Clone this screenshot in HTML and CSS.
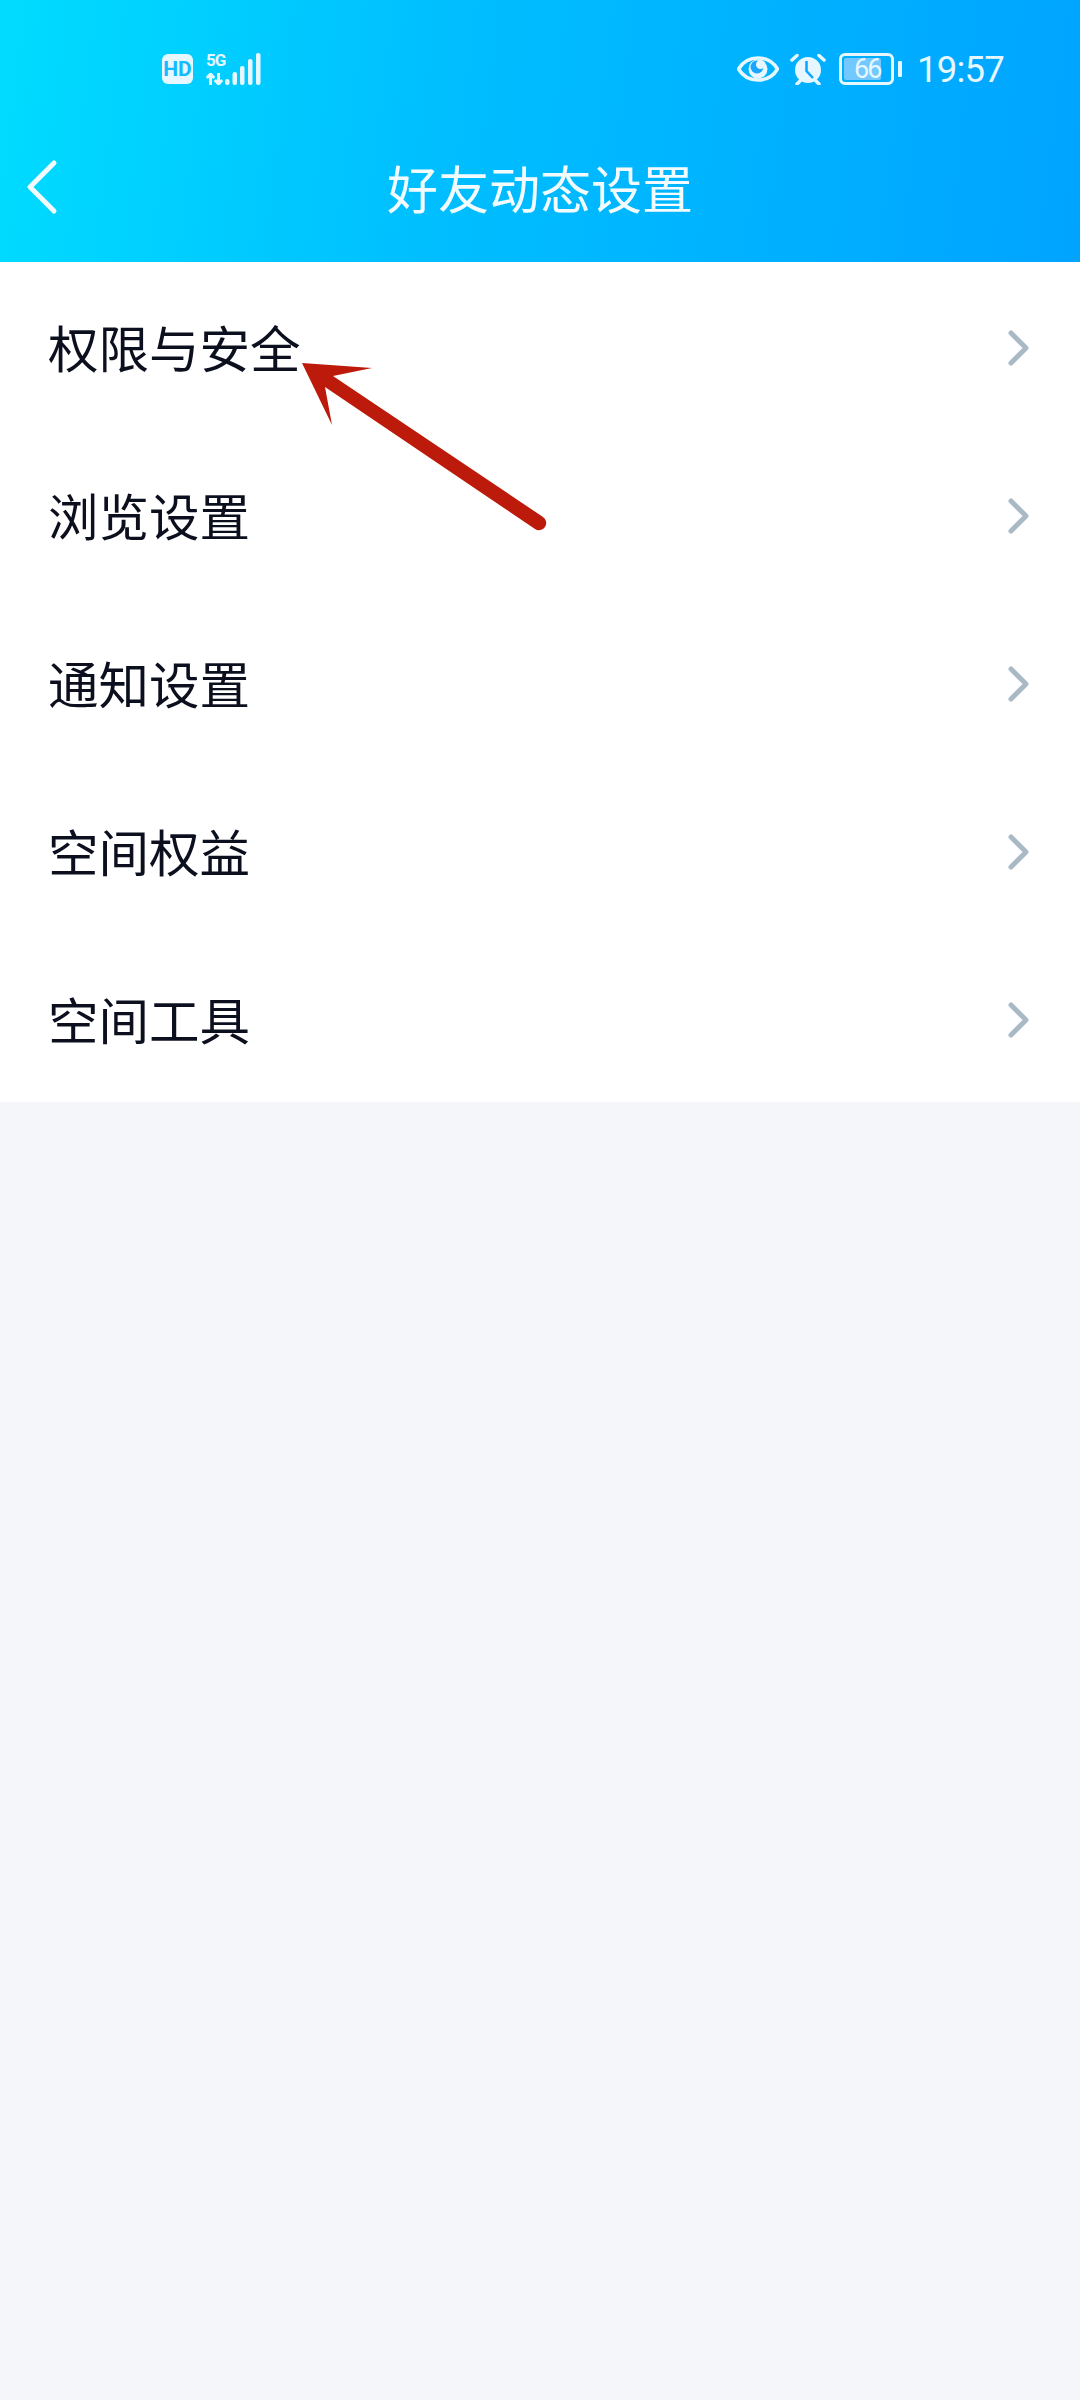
FILE: index.html
```html
<!DOCTYPE html>
<html lang="zh-CN">
<head>
<meta charset="UTF-8" />
<meta name="viewport" content="width=1080, initial-scale=1.0" />
<title>好友动态设置</title>
<link rel="stylesheet" href="styles.css">
</head>
<body>
  <div class="page">
    <header class="top">
      <div class="status-bar">
        <div class="status-left">
          <span class="hd">HD</span>
          <div class="net">
            <span class="fiveg">5G</span>
            <svg class="updown" width="17" height="12" viewBox="0 0 17 12">
              <path d="M4.500 12V1M.8 5l3.700-4L8.200 5" fill="none" stroke="#e6f7ff" stroke-width="3"/>
              <path d="M12.500 0V11M8.800 7l3.700 4L16.200 7" fill="none" stroke="#e6f7ff" stroke-width="3"/>
            </svg>
          </div>
          <svg class="signal" width="36" height="32" viewBox="0 0 36 32">
            <rect x="0" y="26" width="4.500" height="6" rx="2.200" fill="#e6f7ff"/>
            <rect x="7.500" y="19" width="4.500" height="13" rx="2" fill="#e6f7ff"/>
            <rect x="15" y="13" width="4.500" height="19" rx="2" fill="#e6f7ff"/>
            <rect x="23" y="6" width="4.500" height="26" rx="2" fill="#e6f7ff"/>
            <rect x="31" y="0" width="4.500" height="32" rx="2" fill="#e6f7ff"/>
          </svg>
        </div>
        <div class="status-right">
          <svg class="eye" width="42" height="26" viewBox="0 0 42 26">
            <path d="M1.500 13C6 5.500 13 2 21 2s15 3.500 19.500 11C36 20.500 29 24 21 24S6 20.500 1.500 13z" fill="none" stroke="#e6f7ff" stroke-width="3.500"/>
            <circle cx="21" cy="13" r="9.500" fill="#e6f7ff"/>
            <circle cx="20" cy="11" r="6.500" fill="#1aa6ff"/>
            <circle cx="23.500" cy="8.500" r="4.500" fill="#e6f7ff"/>
          </svg>
          <svg class="alarm" width="36" height="32" viewBox="0 0 36 32">
            <circle cx="18" cy="17" r="13" fill="#e6f7ff"/>
            <path d="M16.500 8v10l6.500 7" fill="none" stroke="#0aa6ff" stroke-width="2.500"/>
            <path d="M2 7l5-4.500M34 7l-5-4.500" fill="none" stroke="#e6f7ff" stroke-width="3.500" stroke-linecap="round"/>
            <path d="M7 31l3-3M29 31l-3-3" fill="none" stroke="#e6f7ff" stroke-width="3.500" stroke-linecap="round"/>
          </svg>
          <div class="battery">
            <div class="battery-box">
              <div class="battery-fill" style="width: 82%"></div>
              <span class="battery-num">66</span>
            </div>
            <div class="battery-nub"></div>
          </div>
          <span class="time">19:57</span>
        </div>
      </div>
      <div class="nav-bar">
        <svg class="back" width="34" height="56" viewBox="0 0 34 56">
          <path d="M28 4L4 28l24 24" fill="none" stroke="#f2fcff" stroke-width="5" stroke-linecap="round" stroke-linejoin="round"/>
        </svg>
        <h1 class="title">好友动态设置</h1>
      </div>
    </header>

    <ul class="menu">
      <li class="menu-item">
        <span>权限与安全</span>
        <svg class="chevron" width="22" height="36" viewBox="0 0 22 36"><path d="M3 3l15 15L3 33" fill="none" stroke="#a9bac7" stroke-width="5" stroke-linecap="round" stroke-linejoin="round"/></svg>
      </li>
      <li class="menu-item">
        <span>浏览设置</span>
        <svg class="chevron" width="22" height="36" viewBox="0 0 22 36"><path d="M3 3l15 15L3 33" fill="none" stroke="#a9bac7" stroke-width="5" stroke-linecap="round" stroke-linejoin="round"/></svg>
      </li>
      <li class="menu-item">
        <span>通知设置</span>
        <svg class="chevron" width="22" height="36" viewBox="0 0 22 36"><path d="M3 3l15 15L3 33" fill="none" stroke="#a9bac7" stroke-width="5" stroke-linecap="round" stroke-linejoin="round"/></svg>
      </li>
      <li class="menu-item">
        <span>空间权益</span>
        <svg class="chevron" width="22" height="36" viewBox="0 0 22 36"><path d="M3 3l15 15L3 33" fill="none" stroke="#a9bac7" stroke-width="5" stroke-linecap="round" stroke-linejoin="round"/></svg>
      </li>
      <li class="menu-item">
        <span>空间工具</span>
        <svg class="chevron" width="22" height="36" viewBox="0 0 22 36"><path d="M3 3l15 15L3 33" fill="none" stroke="#a9bac7" stroke-width="5" stroke-linecap="round" stroke-linejoin="round"/></svg>
      </li>
    </ul>

    <!-- red arrow drawn over the screenshot -->
    <svg class="arrow" width="1080" height="600" viewBox="0 0 1080 600">
      <path d="M302 363L372 368L333 376L543 517A7 7 0 0 1 535 529L325 387L332 425z" fill="#bc1a0a"/>
    </svg>
  </div>
</body>
</html>
```

FILE: styles.css
```css
* {
  box-sizing: border-box;
}
body {
  margin: 0;
  background: #f4f6fa;
  font-family: "Noto Sans CJK SC", "Noto Sans", sans-serif;
}
.page {
  position: relative;
  width: 1080px;
  height: 2400px;
  overflow: hidden;
}

/* Header */
.top {
  height: 262px;
  background: linear-gradient(97deg, #00dcff 0%, #00bfff 40%, #00a4ff 100%);
}
.status-bar {
  display: flex;
  justify-content: space-between;
  align-items: center;
  height: 115px;
  padding: 22px 76px 0 162px;
  color: #e6f7ff;
}
.status-left {
  display: flex;
  align-items: center;
}
.hd {
  width: 31px;
  height: 30px;
  margin-right: 13px;
  border-radius: 6px;
  background: #e6f7ff;
  color: #12bbff;
  font-family: "Roboto", sans-serif;
  font-size: 21px;
  font-weight: 700;
  line-height: 30px;
  text-align: center;
}
.net {
  display: flex;
  flex-direction: column;
  width: 19px;
  height: 32px;
  justify-content: space-between;
}
.fiveg {
  font-family: "Roboto", sans-serif;
  font-size: 17px;
  font-weight: 700;
  line-height: 15px;
  letter-spacing: -1px;
}
.signal {
  display: block;
}
.status-right {
  display: flex;
  align-items: center;
}
.eye {
  margin-right: 11px;
}
.alarm {
  margin-right: 13px;
}
.battery {
  display: flex;
  align-items: center;
  margin-right: 15px;
}
.battery-box {
  position: relative;
  width: 55px;
  height: 32px;
  padding: 2px;
  border: 3px solid #e6f7ff;
  border-radius: 6px;
}
.battery-fill {
  height: 100%;
  border-radius: 2px;
  background: #73c8ff;
}
.battery-num {
  position: absolute;
  top: 0;
  left: 12px;
  color: #e6f7ff;
  font-family: "Roboto", sans-serif;
  font-size: 27px;
  line-height: 27px;
  letter-spacing: -2px;
}
.battery-nub {
  width: 4px;
  height: 16px;
  margin-left: 4px;
  border-radius: 1px;
  background: #e6f7ff;
}
.time {
  margin-top: 2px;
  font-family: "Roboto", sans-serif;
  font-size: 36.5px;
  font-weight: 400;
  line-height: 40px;
  letter-spacing: -0.8px;
}

/* Nav */
.nav-bar {
  display: grid;
  grid-template-columns: 1fr auto 1fr;
  align-items: center;
  height: 147px;
  padding-bottom: 4px;
}
.back {
  display: block;
  margin-left: 26px;
}
.title {
  margin: 0;
  grid-column: 2;
  color: #f2fcff;
  font-size: 51px;
  font-weight: 400;
  line-height: 70px;
}

/* Menu */
.menu {
  margin: 0;
  padding: 0;
  list-style: none;
  background: #fff;
}
.menu-item {
  display: flex;
  justify-content: space-between;
  align-items: center;
  height: 168px;
  padding: 0 50px 0 48px;
  color: #0b0f1e;
  font-size: 50.5px;
  font-weight: 400;
  line-height: 70px;
}
.chevron {
  margin-top: 3px;
}

.arrow {
  position: absolute;
  top: 0;
  left: 0;
}
```
